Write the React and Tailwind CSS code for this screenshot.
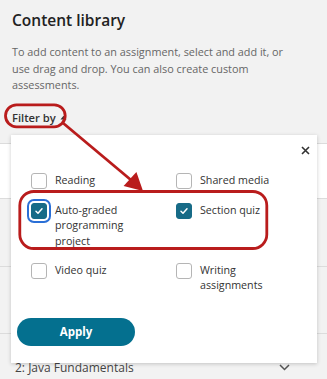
import React from "react";

const options = [
  { label: "Reading", checked: false },
  { label: "Shared media", checked: false },
  { label: "Auto-graded programming project", checked: true, focused: true },
  { label: "Section quiz", checked: true },
  { label: "Video quiz", checked: false },
  { label: "Writing assignments", checked: false },
];

function Checkbox({ checked, focused }) {
  return (
    <span
      className={
        "flex h-4 w-4 shrink-0 items-center justify-center rounded-[3px] border " +
        (checked ? "border-[#176b87] bg-[#176b87]" : "border-[#b5b5b5] bg-white") +
        (focused ? " ring-2 ring-[#2a6fd6] ring-offset-2" : "")
      }
    >
      {checked && (
        <svg width="10" height="10" viewBox="0 0 10 10" fill="none">
          <path d="M2 5.3 L4 7.2 L8 2.8" stroke="white" strokeWidth="1.5" strokeLinecap="round" strokeLinejoin="round" />
        </svg>
      )}
    </span>
  );
}

export default function App() {
  return (
    <div className="relative h-[379px] w-[327px] overflow-hidden bg-[#f2f2f2] font-['Open_Sans',sans-serif]">
      <div className="px-[12px] pt-[10px]">
        <h1 className="text-[15.5px] font-semibold leading-[21px] text-[#222]">Content library</h1>
        <p className="mt-[13px] w-[284px] text-[10.85px] leading-[16.5px] text-[#666]">
          To add content to an assignment, select and add it, or use drag and drop. You can also create custom assessments.
        </p>
        <button className="mt-[16px] flex items-center gap-[4px] text-[11.2px] font-semibold leading-[16px] text-[#333]">
          Filter by
          <svg width="7" height="5" viewBox="0 0 7 5">
            <path d="M0.5 4.5 L3.5 0.8 L6.5 4.5 Z" fill="#333" />
          </svg>
        </button>
      </div>

      {/* list behind the filter popup */}
      <div className="mt-[17px]">
        <div className="h-[56px] border-y border-[#dcdcdc] bg-white" />
        <div className="h-[68px] border-b border-[#dcdcdc]" />
        <div className="h-[67px] border-b border-[#dcdcdc]" />
        <div className="flex h-[68px] items-center justify-between pl-[15px] pr-[37px]">
          <span className="text-[12px] text-[#444]">2: Java Fundamentals</span>
          <svg width="11" height="7" viewBox="0 0 11 7" fill="none">
            <path d="M1 1 L5.5 5.5 L10 1" stroke="#555" strokeWidth="1.5" />
          </svg>
        </div>
      </div>

      {/* filter popup */}
      <div className="absolute left-[11px] top-[135px] w-[306px] bg-white px-[6px] pb-[17px] pt-[38px] shadow-[0_1px_4px_rgba(0,0,0,0.2)]">
        <button className="absolute right-[7px] top-[11px] flex h-[9px] w-[9px] items-center justify-center">
          <svg width="9" height="9" viewBox="0 0 9 9" fill="none">
            <path d="M1 1 L8 8 M8 1 L1 8" stroke="#333" strokeWidth="1.6" />
          </svg>
        </button>

        <div className="grid grid-cols-[145px_1fr] gap-y-[13.5px] pl-[14px]">
          {options.map((o) => (
            <label key={o.label} className="flex items-start gap-[8px]">
              <Checkbox checked={o.checked} focused={o.focused} />
              <span className="w-[95px] text-[10.7px] leading-[15.5px] text-[#333]">{o.label}</span>
            </label>
          ))}
        </div>

        <button className="mt-[24.5px] flex h-[28px] w-[118px] items-center justify-center rounded-full bg-[#04708f] text-[11.5px] font-bold text-white">
          Apply
        </button>
      </div>

      {/* annotations */}
      <svg className="pointer-events-none absolute inset-0" width="327" height="379" fill="none">
        <rect x="5.5" y="104.8" width="59.7" height="22" rx="11" stroke="#b91c1c" strokeWidth="2.8" />
        <path d="M63 123 L131 180" stroke="#b91c1c" strokeWidth="2.8" />
        <path d="M123.6 186 L136.4 172 L143 191 Z" fill="#b91c1c" />
        <rect x="19.8" y="191.5" width="247" height="57" rx="14" stroke="#b91c1c" strokeWidth="2.8" />
      </svg>
    </div>
  );
}
